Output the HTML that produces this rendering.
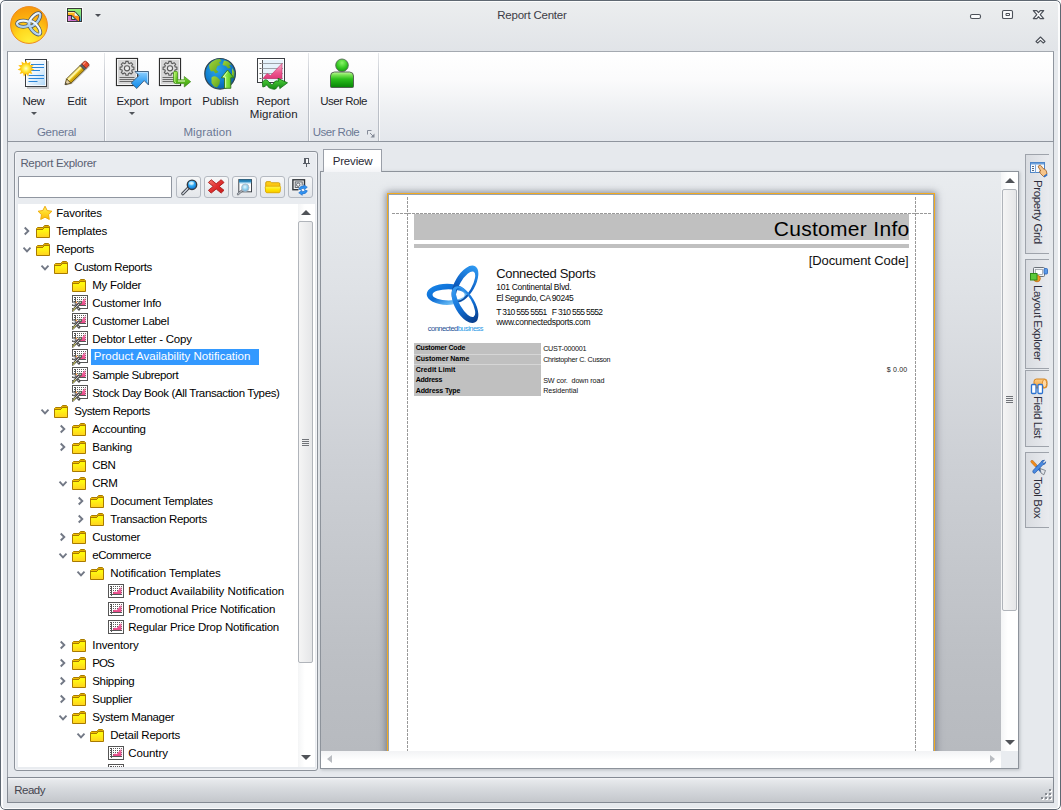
<!DOCTYPE html>
<html lang="en">
<head>
<meta charset="utf-8">
<title>Report Center</title>
<style>
*{box-sizing:border-box;margin:0;padding:0}
html,body{width:1061px;height:810px;overflow:hidden;background:#fff}
body{font-family:"Liberation Sans",sans-serif;font-size:11.5px;color:#1e1e1e;position:relative}
.abs{position:absolute}
.t{position:absolute;white-space:nowrap}
#win{position:absolute;left:0;top:0;width:1061px;height:810px;border-radius:5px;background:#e6e9ed;overflow:hidden}
#win:before{content:"";position:absolute;left:0;top:0;right:0;bottom:0;border:1px solid #5f6872;border-radius:5px;pointer-events:none;z-index:6}
#win:after{content:"";position:absolute;left:1px;top:1px;right:1px;bottom:1px;border:2px solid rgba(255,255,255,.85);border-top-width:1.500px;border-bottom-width:1.500px;border-radius:4px;pointer-events:none;z-index:5}
#titlegrad{position:absolute;left:0;top:0;width:1061px;height:51px;background:linear-gradient(#eceeef,#e1e4e8)}
#title{position:absolute;left:0;top:7px;width:1061px;text-align:center;font-size:12px;color:#3b3b3b;letter-spacing:-0.25px}
/* ribbon */
#ribbon{position:absolute;left:7px;top:51px;width:1047px;height:91px;border:1px solid #8f959e;border-top-color:#a4a9b0;background:linear-gradient(#ffffff 0%,#fbfbfc 30%,#eceef1 70%,#e4e7ec 100%)}
.gsep{position:absolute;top:1px;width:1px;height:88px;background:linear-gradient(rgba(185,190,198,.35),#c4c8cf 30%,#b4b9c1 100%)}
.gsep:after{content:"";position:absolute;left:1px;top:0;width:1px;height:88px;background:rgba(255,255,255,.75)}
.gcap{position:absolute;top:75px;height:14px;text-align:center;font-size:12px;color:#6b7894;letter-spacing:-0.2px;white-space:nowrap}
.rbtn{position:absolute;top:43px;text-align:center;font-size:12px;color:#1e1e2a;line-height:13px;white-space:nowrap;letter-spacing:-0.2px}
.dd{position:absolute;width:0;height:0;border-left:3px solid transparent;border-right:3px solid transparent;border-top:3.300px solid #50545a;margin-left:-.5px}
/* panels */
.panel{position:absolute;border:1px solid #8d939b;background:#e9ecf0;border-radius:3px;box-shadow:inset 0 0 0 1px rgba(255,255,255,.45)}
.ptitle{position:absolute;left:5px;top:4px;font-size:12px;color:#5a6072;letter-spacing:-0.3px;white-space:nowrap}
#search{position:absolute;left:3px;top:24px;width:154px;height:22px;border:1px solid #9096a0;background:#fff;border-radius:1px}
.tbtn{position:absolute;top:24px;width:25px;height:22px;border:1px solid #b4b9c1;border-radius:3px;background:linear-gradient(#f7f8f9,#e3e6ea)}
.tbtn svg{position:absolute;left:0;top:0}
#tree{position:absolute;left:3px;top:52px;width:280px;height:563px;background:#fff;overflow:hidden}
.row{position:absolute;left:0;height:18px;line-height:18px;white-space:nowrap;font-size:11.5px;color:#1c1c1c}
.row .lbl{position:absolute;top:0;height:18px;line-height:17px;white-space:nowrap}
.row svg{position:absolute;top:1px}
.sel{position:absolute;background:#3399ff;height:16px}
/* scrollbars */
.vsb{position:absolute;background:linear-gradient(90deg,#f4f5f6,#ffffff 40%,#ffffff)}
.thumb{position:absolute;border:1px solid #b0b4ba;border-radius:2px;background:linear-gradient(90deg,#f5f5f5,#e5e6e8)}
.grip{position:absolute;width:7px;height:1px;background:#707378;box-shadow:0 2px 0 #707378,0 4px 0 #707378,0 6px 0 #707378}
.arr-u{position:absolute;width:0;height:0;border-left:5px solid transparent;border-right:5px solid transparent;border-bottom:5px solid #505358}
.arr-d{position:absolute;width:0;height:0;border-left:5px solid transparent;border-right:5px solid transparent;border-top:5px solid #505358}
.arr-l{position:absolute;width:0;height:0;border-top:4.5px solid transparent;border-bottom:4.5px solid transparent;border-right:5px solid #b9bcc1}
.arr-r{position:absolute;width:0;height:0;border-top:4.5px solid transparent;border-bottom:4.5px solid transparent;border-left:5px solid #b9bcc1}
/* preview */
#tab{position:absolute;left:323px;top:149px;width:59px;height:23px;border:1px solid #9a9fa8;border-bottom:none;background:linear-gradient(#ffffff 0,#ffffff 70%,#f3f4f7 100%);z-index:2}
#pv{position:absolute;left:320px;top:171px;width:699px;height:598px;border:1px solid #8d939b;background:#e9ecf0;box-shadow:1px 1px 3px rgba(105,110,122,.38)}
#pvarea{position:absolute;left:0;top:0;width:680px;height:579px;background:linear-gradient(#e9ecef 0%,#dfe2e6 20%,#cdd0d5 50%,#bcbfc4 85%,#b7babf 100%);overflow:hidden}
#page{position:absolute;left:66px;top:21px;width:548px;height:600px;background:#fff;border:1px solid #f2aa20;box-shadow:inset 0 0 0 1px #97a3b0,0 0 7px 1px rgba(70,75,90,.6)}
.dash-v{position:absolute;width:1px;background:repeating-linear-gradient(180deg,#999 0,#999 3px,transparent 3px,transparent 4px)}
.dash-h{position:absolute;height:1px;background:repeating-linear-gradient(90deg,#999 0,#999 3px,transparent 3px,transparent 4px)}
.rp{position:absolute;white-space:nowrap;color:#111}
/* side tabs */
.stab{position:absolute;left:1025px;width:24px;border:1px solid #9ea3ab;border-right:none;background:linear-gradient(90deg,#d9dce1,#e9ebef)}
/* status */
#status{position:absolute;left:7px;top:777px;width:1047px;height:26px;border:1px solid #848a93;background:linear-gradient(#f6f7f8 0,#e7e9ec 2px,#d7dade 45%,#c4c7cc 100%)}
#status span{position:absolute;left:6px;top:5px;font-size:12px;color:#45454f;letter-spacing:-0.2px}
</style>
</head>
<body>
<div id="win">
<div id="titlegrad"></div>

<svg class="abs" style="left:7px;top:4px" width="44" height="44" viewBox="0 0 44 44">
<defs>
<radialGradient id="og" cx="50%" cy="95%" r="90%"><stop offset="0" stop-color="#ffee38"/><stop offset=".4" stop-color="#ffd81e"/><stop offset=".75" stop-color="#fcae0e"/><stop offset="1" stop-color="#f79c0a"/></radialGradient>
<linearGradient id="ol" x1="0" y1="0" x2="0" y2="1"><stop offset="0" stop-color="#f4fbff"/><stop offset="1" stop-color="#a8ceef"/></linearGradient>
</defs>
<circle cx="22" cy="21" r="18.400" fill="url(#og)" stroke="#ee8a1c" stroke-width="1"/>
<g fill="none" stroke="#34486e" stroke-width="3.700" opacity=".85">
<ellipse cx="16.300" cy="19.700" rx="6.300" ry="3.100"/>
<ellipse cx="27.550" cy="15.750" rx="8.100" ry="3.500" transform="rotate(-50.700 27.550 15.750)"/>
<ellipse cx="27.550" cy="23.850" rx="8.100" ry="3.500" transform="rotate(50.700 27.550 23.850)"/>
</g>
<g fill="none" stroke="url(#ol)" stroke-width="2.200">
<ellipse cx="16.300" cy="19.700" rx="6.300" ry="3.100"/>
<ellipse cx="27.550" cy="15.750" rx="8.100" ry="3.500" transform="rotate(-50.700 27.550 15.750)"/>
<ellipse cx="27.550" cy="23.850" rx="8.100" ry="3.500" transform="rotate(50.700 27.550 23.850)"/>
</g>
</svg>
<svg class="abs" style="left:66px;top:7px" width="17" height="16" viewBox="-1 -1 17 16">
<defs><linearGradient id="qg" x1="0" y1="0" x2="0" y2="1"><stop offset="0" stop-color="#98f274"/><stop offset=".5" stop-color="#7ee07e"/><stop offset="1" stop-color="#3a9ae8"/></linearGradient></defs>
<rect x="-.5" y="-.5" width="16" height="15" fill="none" stroke="#fff" opacity=".7"/>
<rect x=".5" y=".5" width="14" height="13" fill="url(#qg)" stroke="#383838"/>
<path d="M1 4h6.500l5 5.500V13h-2L5 7.500H1z" fill="#ff8e14"/>
<path d="M1 4h6v1.200H1z" fill="#ffe98e"/>
<path d="M1 5.200h6.500v1.500H1z" fill="#ffbe1c"/>
<path d="M1 8h3.500v3H9l2 2H1z" fill="#cc6ccc"/>
<path d="M1 8h1.500v5H1z" fill="#dc8adc"/>
<path d="M7.600 4.200v3.600h3.500z" fill="#e6fbff"/>
<path d="M5.200 8.800v2h2.200z" fill="#e6fbff"/>
<path d="M1 3.500h7l4.500 5V13" stroke="#383838" fill="none"/>
<path d="M1 7.500h4l5.500 5.500" stroke="#383838" fill="none"/>
<path d="M4.500 8v3.500H8.500" stroke="#383838" fill="none"/>
</svg>
<div class="dd" style="left:95px;top:14px;border-top-color:#4a4e55"></div>
<svg class="abs" style="left:960px;top:4px" width="90" height="46" viewBox="0 0 90 46">
<g fill="#fafbfc" stroke="#4c5159" stroke-width="1.100" stroke-linejoin="round">
<rect x="10.500" y="10.500" width="10" height="4" rx="1.600"/>
<rect x="42.500" y="6.500" width="10" height="8" rx="1.300"/>
<rect x="46" y="9.500" width="3.500" height="2" stroke-width="1"/>
<path d="M73.300 6.600h3.500l1.700 2 1.700-2h3.500l-3.500 4 3.500 4h-3.500l-1.700-2-1.700 2h-3.500l3.500-4z" stroke-width="1.200"/>
<path d="M76 37.500l4.500-4.500 4.500 4.500-1.700 1.500-2.800-2.600-2.800 2.600z"/>
</g>
</svg>
<div class="t" style="left:497.28px;top:9px;font-size:11.5px;line-height:12px;letter-spacing:-0.226px;color:#3c3c46">Report Center</div>
<div id="ribbon">
<svg class="abs" style="left:9px;top:4px" width="34" height="34" viewBox="0 0 34 34">
<defs><linearGradient id="nd" x1="0" y1="0" x2="1" y2="1"><stop offset="0" stop-color="#ffffff"/><stop offset=".5" stop-color="#eaf4fd"/><stop offset="1" stop-color="#a9d4f6"/></linearGradient>
<radialGradient id="ns" cx="50%" cy="50%" r="50%"><stop offset="0" stop-color="#fffbd0"/><stop offset=".5" stop-color="#fff04a"/><stop offset="1" stop-color="#ffc814"/></radialGradient></defs>
<rect x="10" y="5" width="22" height="28" fill="#000" opacity=".18"/>
<rect x="8.500" y="3.500" width="21" height="27" fill="url(#nd)" stroke="#3a3d42"/>
<rect x="9.500" y="4.500" width="19" height="25" fill="none" stroke="#fff" opacity=".8"/>
<g stroke="#2b86d9" stroke-width="1.1"><path d="M14 8.500h13M14 11.500h13M14 14.500h9M11.500 19.500h15.500M11.500 22.500h15.500M11.500 25.500h9"/></g>
<g transform="translate(9 12.500) scale(.92) translate(-9 -12.500)"><path d="M9 3.500l1.600 3.600 3.300-2.200-.5 3.900 4 .1-2.700 2.900 3.400 2-3.800 1.200 1.600 3.600-3.700-1.200-.8 3.900-2.400-3.100-2.400 3.100-.8-3.900-3.700 1.200 1.600-3.600L-.100 13.800l3.400-2L.600 8.900l4-.1-.5-3.900 3.300 2.200z" fill="#ffc20e"/>
<circle cx="9" cy="12.500" r="5.800" fill="url(#ns)"/></g>
</svg>
<svg class="abs" style="left:56px;top:5px" width="34" height="34" viewBox="0 0 34 34">
<defs><linearGradient id="pe" x1="0" y1="0" x2="0" y2="1"><stop offset="0" stop-color="#fff6a8"/><stop offset=".4" stop-color="#f9dc30"/><stop offset="1" stop-color="#c99a08"/></linearGradient></defs>
<g transform="translate(1 27.700) rotate(-44.500) scale(.95 1)">
<path d="M0 0L5.500 -3.200H31.500Q33.300 -3.200 33.300 0Q33.300 3.200 31.500 3.200H5.500z" fill="#000" opacity=".18" transform="translate(.2 1.300)"/>
<path d="M5.500 -3.100H25.500V3.100H5.500z" fill="url(#pe)" stroke="#5d4a12" stroke-width=".9"/>
<path d="M5.500 -1.100H25.500" stroke="#fffbd0" stroke-width="1.100" opacity=".85"/>
<path d="M5.500 1.500H25.500" stroke="#b88a06" stroke-width="1.300" opacity=".6"/>
<path d="M0 0L5.500 -3.100V3.100z" fill="#e4d2aa" stroke="#5d4a12" stroke-width=".9" stroke-linejoin="round"/>
<path d="M0 0L2.200 -1.250V1.250z" fill="#4a4a4a"/>
<rect x="25.500" y="-3.100" width="2.500" height="6.200" fill="#5c6066" stroke="#3c3f44" stroke-width=".7"/>
<path d="M28 -3.100H31.500Q33.200 -3.100 33.200 0Q33.200 3.100 31.500 3.100H28z" fill="#e5492c" stroke="#8a2a16" stroke-width=".8"/>
<path d="M28.500 -1.700H32" stroke="#ff9a80" stroke-width="1.100"/>
</g>
</svg>
<svg class="abs" style="left:107px;top:5px" width="38" height="34" viewBox="0 0 38 34">
<defs><linearGradient id="ex" x1="0" y1="0" x2="0" y2="1"><stop offset="0" stop-color="#8fd0ff"/><stop offset=".5" stop-color="#45a9f5"/><stop offset="1" stop-color="#0f8ae8"/></linearGradient></defs>
<rect x="1.500" y="1.500" width="21" height="27" fill="#d6d6d6" stroke="#2e2e2e" stroke-width="1.200"/>
<rect x="2.500" y="2.500" width="19" height="25" fill="none" stroke="#f4f4f4"/><path d="M17.22 9.91L18.91 10.18L18.91 12.42L17.22 12.69L16.67 14.01L17.68 15.40L16.10 16.98L14.71 15.97L13.39 16.52L13.12 18.21L10.88 18.21L10.61 16.52L9.29 15.97L7.90 16.98L6.32 15.40L7.33 14.01L6.78 12.69L5.09 12.42L5.09 10.18L6.78 9.91L7.33 8.59L6.32 7.20L7.90 5.62L9.29 6.63L10.61 6.08L10.88 4.39L13.12 4.39L13.39 6.08L14.71 6.63L16.10 5.62L17.68 7.20L16.67 8.59z" fill="#dcdcdc" stroke="#5a5a5a" stroke-width="1.100"/><circle cx="12" cy="11.3" r="2.600" fill="#ececec" stroke="#5a5a5a" stroke-width="1.100"/><g stroke="#6a6a6a" stroke-width="1"><path d="M4.500 20.500h15M4.500 22.500h15M4.500 24.500h15"/></g>
<path d="M20 14.500H33.500V28L29.200 23.600 21.800 31.500 16.200 26 24 18.500z" fill="url(#ex)" stroke="#3b5876" stroke-width=".9" stroke-linejoin="round"/>
<path d="M21.500 15.500H32.500V25.500" fill="none" stroke="#c8e8ff" stroke-width=".9" opacity=".8"/>
</svg>
<svg class="abs" style="left:150px;top:5px" width="40" height="34" viewBox="0 0 40 34">
<defs><linearGradient id="im" x1="0" y1="0" x2="0" y2="1"><stop offset="0" stop-color="#9be34a"/><stop offset=".55" stop-color="#5fc41e"/><stop offset="1" stop-color="#3e9a12"/></linearGradient></defs>
<rect x="1.500" y="1.500" width="21" height="27" fill="#d6d6d6" stroke="#2e2e2e" stroke-width="1.200"/>
<rect x="2.500" y="2.500" width="19" height="25" fill="none" stroke="#f4f4f4"/><path d="M17.22 9.91L18.91 10.18L18.91 12.42L17.22 12.69L16.67 14.01L17.68 15.40L16.10 16.98L14.71 15.97L13.39 16.52L13.12 18.21L10.88 18.21L10.61 16.52L9.29 15.97L7.90 16.98L6.32 15.40L7.33 14.01L6.78 12.69L5.09 12.42L5.09 10.18L6.78 9.91L7.33 8.59L6.32 7.20L7.90 5.62L9.29 6.63L10.61 6.08L10.88 4.39L13.12 4.39L13.39 6.08L14.71 6.63L16.10 5.62L17.68 7.20L16.67 8.59z" fill="#dcdcdc" stroke="#5a5a5a" stroke-width="1.100"/><circle cx="12" cy="11.3" r="2.600" fill="#ececec" stroke="#5a5a5a" stroke-width="1.100"/><g stroke="#6a6a6a" stroke-width="1"><path d="M4.500 20.500h15M4.500 22.500h15M4.500 24.500h15"/></g>
<path d="M15.500 15.500Q15.500 14.300 17 14.300H18Q19.500 14.300 19.500 15.500V22.800H26.300V19.500L32.700 24.700 26.300 30V26.600H18Q15.500 26.600 15.500 24.100z" fill="url(#im)" stroke="#3f8a1a" stroke-width=".7" stroke-linejoin="round"/>
<path d="M16.800 15.500V24.500Q16.800 25.500 18 25.500" fill="none" stroke="#d6ffa0" stroke-width="1" opacity=".8"/>
<path d="M20 24h7" stroke="#eaffd0" stroke-width="1.100" opacity=".9"/>
</svg>
<svg class="abs" style="left:195px;top:4px" width="36" height="34" viewBox="0 0 36 34">
<defs><radialGradient id="gl" cx="40%" cy="35%" r="70%"><stop offset="0" stop-color="#2ea4ea"/><stop offset=".6" stop-color="#0f7fd0"/><stop offset="1" stop-color="#0a5ea6"/></radialGradient>
<linearGradient id="pa" x1="0" y1="0" x2="1" y2="0"><stop offset="0" stop-color="#c8ff8a"/><stop offset=".5" stop-color="#7be03a"/><stop offset="1" stop-color="#3faa18"/></linearGradient>
<linearGradient id="ld" x1="0" y1="0" x2="1" y2="1"><stop offset="0" stop-color="#a4d63a"/><stop offset="1" stop-color="#5aa01e"/></linearGradient></defs>
<circle cx="17.100" cy="17.800" r="15.300" fill="url(#gl)" stroke="#2f4450" stroke-width="1.200"/>
<path d="M6 9Q9 5 13 3.500L17 3 18.500 5 16 6.500 17.500 9 14.500 10 13 13.500 15.500 16 12.500 17.500 10.500 15 8 15.500 6.500 12.500z" fill="url(#ld)"/>
<path d="M21 4.500l4 1 3.500 3-2.500.5 2 3-3 .5-2-2.500-3.500-1 1-3z" fill="url(#ld)"/>
<path d="M8.500 21.500Q11 19.500 14 21L17 24 16.500 28 14 31.500 11 30.500 8.500 27z" fill="url(#ld)"/>
<path d="M29 12l2.500 4-.5 6-2-3z" fill="url(#ld)"/>
<path d="M24.600 14L31 21.800H27.800V32.300H21.500V21.800H18.300z" fill="url(#pa)" stroke="#35761c" stroke-width=".9" stroke-linejoin="round"/>
<path d="M24.600 15.500L20.300 21H22.600V31.600" fill="none" stroke="#e6ffc4" stroke-width=".9" opacity=".9"/>
</svg>
<svg class="abs" style="left:246px;top:5px" width="36" height="34" viewBox="0 0 36 34">
<defs><linearGradient id="pk" x1="0" y1="0" x2="0" y2="1"><stop offset="0" stop-color="#f9b3cd"/><stop offset=".6" stop-color="#ec5a90"/><stop offset="1" stop-color="#e0397a"/></linearGradient>
<linearGradient id="wg" x1="0" y1="0" x2="0" y2="1"><stop offset="0" stop-color="#4fd23c"/><stop offset="1" stop-color="#168a14"/></linearGradient></defs>
<rect x="3.500" y="1.500" width="27" height="24" fill="#fdfefe" stroke="#3c3f44"/>
<rect x="8" y="3" width="21" height="21" fill="#e6f3fb"/>
<path d="M8.500 3V25" stroke="#555" stroke-width="1"/>
<g stroke="#8a8f96" stroke-width=".8"><path d="M8 6.500h21M8 11.500h21M8 16.500h21M8 21.500h21"/></g>
<g stroke="#666" stroke-width="1"><path d="M5.500 6.500h2M5.500 11.500h2M5.500 16.500h2M5.500 21.500h2"/></g>
<path d="M9 21.500L13 16.500 16.500 18.500 28 6.500V21.500z" fill="url(#pk)" stroke="#c8306a" stroke-width=".6"/>
<path d="M8.300 25.300Q11.500 20.500 14.600 24.600T19 27.300Q20.300 23.800 22.800 23.800L24.600 24.300 24 21.300 33.500 25.800 25.800 31.600 25.600 28.900Q23.700 28.300 22.500 31T14.800 30.600Q12.600 26.300 11.300 29.300L8.800 30z" fill="url(#wg)" stroke="#0f6a10" stroke-width=".8" stroke-linejoin="round"/>
</svg>
<svg class="abs" style="left:316px;top:4px" width="36" height="34" viewBox="0 0 36 34">
<defs><linearGradient id="ug" x1="0" y1="0" x2="0" y2="1"><stop offset="0" stop-color="#c4f9a4"/><stop offset=".18" stop-color="#7ee458"/><stop offset=".45" stop-color="#2cc01c"/><stop offset="1" stop-color="#078406"/></linearGradient>
<radialGradient id="uh" cx="50%" cy="30%" r="70%"><stop offset="0" stop-color="#8af468"/><stop offset=".6" stop-color="#34c822"/><stop offset="1" stop-color="#159c0e"/></radialGradient></defs>
<path d="M6.500 30.500V20Q6.500 16 10.500 16H25.500Q29.500 16 29.500 20V30.500Q29.500 31.500 28.500 31.500H7.500Q6.500 31.500 6.500 30.500z" fill="url(#ug)" stroke="#4c584c" stroke-width=".9"/>
<circle cx="18" cy="9.300" r="6.300" fill="url(#uh)" stroke="#5a6a5a" stroke-width=".9"/>
</svg>
<div class="t" style="left:14.39px;top:43px;font-size:11.5px;line-height:12px;letter-spacing:-0.275px;color:#1e1e2a">New</div>
<div class="t" style="left:59.29px;top:43px;font-size:11.5px;line-height:12px;letter-spacing:-0.135px;color:#1e1e2a">Edit</div>
<div class="t" style="left:108.39px;top:43px;font-size:11.5px;line-height:12px;letter-spacing:-0.193px;color:#1e1e2a">Export</div>
<div class="t" style="left:151.58px;top:43px;font-size:11.5px;line-height:12px;letter-spacing:-0.151px;color:#1e1e2a">Import</div>
<div class="t" style="left:194.28px;top:43px;font-size:11.5px;line-height:12px;letter-spacing:-0.204px;color:#1e1e2a">Publish</div>
<div class="t" style="left:248.58px;top:43px;font-size:11.5px;line-height:12px;letter-spacing:-0.290px;color:#1e1e2a">Report</div>
<div class="t" style="left:241.78px;top:56px;font-size:11.5px;line-height:12px;letter-spacing:0.064px;color:#1e1e2a">Migration</div>
<div class="t" style="left:312.28px;top:43px;font-size:11.5px;line-height:12px;letter-spacing:-0.506px;color:#1e1e2a">User Role</div>
<div class="dd" style="left:23px;top:60px"></div>
<div class="dd" style="left:121px;top:60px"></div>
<div class="gsep" style="left:96px"></div>
<div class="gsep" style="left:300px"></div>
<div class="gsep" style="left:370px"></div>
<div class="t" style="left:28.88px;top:74px;font-size:11.5px;line-height:12px;letter-spacing:-0.233px;color:#6b7894">General</div>
<div class="t" style="left:175.38px;top:74px;font-size:11.5px;line-height:12px;letter-spacing:0.109px;color:#6b7894">Migration</div>
<div class="t" style="left:304.78px;top:74px;font-size:11.5px;line-height:12px;letter-spacing:-0.528px;color:#6b7894">User Role</div>
<svg class="abs" style="left:359px;top:78px" width="8" height="8" viewBox="0 0 8 8"><path d="M.5 4.500V.500H4.500" fill="none" stroke="#858b98" stroke-width="1"/><path d="M7.500 3.500V7.500H3.500z" fill="#858b98"/><path d="M3 3L6 6" stroke="#858b98" stroke-width="1"/></svg>
</div>
<div class="panel" style="left:14px;top:151px;width:304px;height:620px">
<div class="t" style="left:5.39px;top:5px;font-size:11.5px;line-height:12px;letter-spacing:-0.310px;color:#5a6072">Report Explorer</div>
<svg class="abs" style="left:288px;top:6px" width="7" height="9" viewBox="0 0 7 9">
<path d="M3 1h2v4H3z" fill="#fafbfc"/><path d="M1 0h5v1H1zM1 1h2v4H1zM5 1h1v4H5zM0 5h7v1H0zM3 6h1v3H3z" fill="#595e67"/>
</svg>
<div id="search"></div>
<div class="tbtn" style="left:161px"><svg width="23" height="20" viewBox="0 0 23 20">
<defs><radialGradient id="mg" cx="45%" cy="35%" r="65%"><stop offset="0" stop-color="#b6eeff"/><stop offset=".5" stop-color="#2ba6f2"/><stop offset="1" stop-color="#0d6fd0"/></radialGradient></defs>
<path d="M5.800 16.700L11.500 10.800" stroke="#3c4047" stroke-width="3.200" stroke-linecap="round"/>
<path d="M5.800 16.700L11.500 10.800" stroke="#cdd2da" stroke-width="1.400" stroke-linecap="round"/>
<circle cx="15" cy="7.800" r="4.700" fill="url(#mg)" stroke="#343a42" stroke-width="1.400"/>
<ellipse cx="14.300" cy="6.200" rx="2.700" ry="1.600" fill="#fff" opacity=".5"/>
</svg></div>
<div class="tbtn" style="left:189px"><svg width="23" height="20" viewBox="0 0 23 20">
<defs><linearGradient id="dx" x1="0" y1="0" x2="1" y2="1"><stop offset="0" stop-color="#f47a70"/><stop offset=".5" stop-color="#e03030"/><stop offset="1" stop-color="#c41a1a"/></linearGradient></defs>
<path d="M6.200 2.700L11.200 6.800 16.200 2.700 19 5.500 14.200 9.400 19 13.300 16.200 16.100 11.200 12 6.200 16.100 3.400 13.300 8.200 9.400 3.400 5.500z" fill="url(#dx)" stroke="#a81818" stroke-width=".9" stroke-linejoin="round"/>
</svg></div>
<div class="tbtn" style="left:217px"><svg width="23" height="20" viewBox="0 0 23 20">
<defs><radialGradient id="pg" cx="45%" cy="40%" r="60%"><stop offset="0" stop-color="#e6f8ff"/><stop offset=".6" stop-color="#8fd0ee"/><stop offset="1" stop-color="#62b0dc"/></radialGradient>
<linearGradient id="pt" x1="0" y1="0" x2="0" y2="1"><stop offset="0" stop-color="#1a6e9e"/><stop offset="1" stop-color="#3a9ad0"/></linearGradient></defs>
<rect x="5.800" y="2.600" width="12.700" height="12.200" fill="#fff" stroke="#3f444b" stroke-width="1"/>
<rect x="6" y="2.400" width="12.300" height="3.300" fill="url(#pt)"/>
<rect x="6.300" y="5.700" width="11.700" height=".9" fill="#a8d8f0"/>
<path d="M5 17.200L9.500 13.200" stroke="#70757d" stroke-width="2.300" stroke-linecap="round"/>
<path d="M5 17.200L9.500 13.200" stroke="#cfd3d9" stroke-width=".9" stroke-linecap="round"/>
<circle cx="12.300" cy="10.700" r="3.700" fill="url(#pg)" stroke="#b0bcc8" stroke-width="1"/>
</svg></div>
<div class="tbtn" style="left:245px"><svg width="23" height="20" viewBox="0 0 23 20">
<defs><linearGradient id="fy" x1="0" y1="0" x2="0" y2="1"><stop offset="0" stop-color="#fff45a"/><stop offset=".5" stop-color="#ffe600"/><stop offset="1" stop-color="#f7c400"/></linearGradient>
<linearGradient id="fb" x1="0" y1="0" x2="0" y2="1"><stop offset="0" stop-color="#ffd21a"/><stop offset="1" stop-color="#f2a800"/></linearGradient></defs>
<path d="M4.700 6Q4.700 4.600 6.100 4.600H9.300L10.600 5.700H17.600Q18.900 5.700 18.900 7V14Q18.900 15.300 17.600 15.300H6Q4.700 15.300 4.700 14z" fill="url(#fb)" stroke="#c99400" stroke-width=".8"/>
<path d="M4.200 10.300Q4.100 9.300 5.300 9.300H18.500Q19.700 9.300 19.600 10.300L19.100 14.600Q19 15.800 17.700 15.800H6.100Q4.800 15.800 4.700 14.600z" fill="url(#fy)" stroke="#dba800" stroke-width=".7"/>
</svg></div>
<div class="tbtn" style="left:273px"><svg width="23" height="20" viewBox="0 0 23 20">
<rect x="3.900" y="2.800" width="11.600" height="9.900" fill="#f2f2f2" stroke="#2f3338" stroke-width="1.400"/>
<rect x="6.200" y="4.900" width="7" height="5.600" fill="#e2e5e9" stroke="#5a5e64" stroke-width=".9"/>
<circle cx="9.200" cy="7.700" r="1.700" fill="#f4f4f4" stroke="#5a5e64" stroke-width=".9"/>
<circle cx="14" cy="13" r="4.600" fill="#f6f8fa"/>
<path d="M9.600 12.200Q11 8.600 14.900 9L14.700 7.700 18.300 10.200 15.300 12.800 15.100 11.300Q12.800 11 11.900 12.900z" fill="#2f92f2" stroke="#1664c0" stroke-width=".6" stroke-linejoin="round"/>
<path d="M18.400 13.800Q17 17.400 13.100 17L13.300 18.300 9.700 15.800 12.700 13.200 12.900 14.700Q15.200 15 16.100 13.100z" fill="#2f92f2" stroke="#1664c0" stroke-width=".6" stroke-linejoin="round"/>
</svg></div>
<div id="tree">
<svg width="16" height="16" viewBox="0 0 16 16" class="abs" style="left:19px;top:1px">
<defs><linearGradient id="st0" x1="0" y1="0" x2="0" y2="1"><stop offset="0" stop-color="#fff08a"/><stop offset=".45" stop-color="#ffdc2a"/><stop offset="1" stop-color="#fbb80a"/></linearGradient></defs>
<path d="M8.00 1.20L10.17 5.51L14.94 6.24L11.52 9.64L12.29 14.41L8.00 12.20L3.71 14.41L4.48 9.64L1.06 6.24L5.83 5.51z" fill="url(#st0)" stroke="#eead0e" stroke-width="1" stroke-linejoin="round"/>
</svg><div class="t" style="left:38.28px;top:3px;font-size:11.5px;line-height:12px;letter-spacing:-0.201px;color:#000">Favorites</div>
<svg width="8" height="10" viewBox="0 0 8 10" class="abs" style="left:5px;top:22px"><path d="M1.700 1.500L5.300 5 1.700 8.500" fill="none" stroke="#727885" stroke-width="1.900"/></svg><svg width="14" height="13" viewBox="0 0 14 13" class="abs" style="left:18px;top:21px">
<defs><linearGradient id="fo1" x1="0" y1="0" x2="0" y2="1"><stop offset="0" stop-color="#ffff00"/><stop offset=".4" stop-color="#fff810"/><stop offset="1" stop-color="#ffd020"/></linearGradient></defs>
<path d="M1.500 2.500H7.500V1.500L8.500 .5H12.500L13.500 1.500V12.500H.5V3.500z" fill="url(#fo1)" stroke="#a87a00" stroke-width="1" stroke-linejoin="round"/>
<path d="M8 1h5v1H8z" fill="#e2aa00"/><path d="M1 3h6v1H1z" fill="#f4c000"/>
<path d="M8 2h5v1H8zM1 4h6v1H1zM7 3h1v1H7z" fill="#a87a00"/>
</svg><div class="t" style="left:38.28px;top:21px;font-size:11.5px;line-height:12px;letter-spacing:-0.192px;color:#000">Templates</div>
<svg width="10" height="8" viewBox="0 0 10 8" class="abs" style="left:4px;top:42px"><path d="M1.500 1.700L5 5.300 8.500 1.700" fill="none" stroke="#727885" stroke-width="1.900"/></svg><svg width="14" height="13" viewBox="0 0 14 13" class="abs" style="left:18px;top:39px">
<defs><linearGradient id="fo2" x1="0" y1="0" x2="0" y2="1"><stop offset="0" stop-color="#ffff00"/><stop offset=".4" stop-color="#fff810"/><stop offset="1" stop-color="#ffd020"/></linearGradient></defs>
<path d="M1.500 2.500H7.500V1.500L8.500 .5H12.500L13.500 1.500V12.500H.5V3.500z" fill="url(#fo2)" stroke="#a87a00" stroke-width="1" stroke-linejoin="round"/>
<path d="M8 1h5v1H8z" fill="#e2aa00"/><path d="M1 3h6v1H1z" fill="#f4c000"/>
<path d="M8 2h5v1H8zM1 4h6v1H1zM7 3h1v1H7z" fill="#a87a00"/>
</svg><div class="t" style="left:38.28px;top:39px;font-size:11.5px;line-height:12px;letter-spacing:-0.384px;color:#000">Reports</div>
<svg width="10" height="8" viewBox="0 0 10 8" class="abs" style="left:22px;top:60px"><path d="M1.500 1.700L5 5.300 8.500 1.700" fill="none" stroke="#727885" stroke-width="1.900"/></svg><svg width="14" height="13" viewBox="0 0 14 13" class="abs" style="left:36px;top:57px">
<defs><linearGradient id="fo3" x1="0" y1="0" x2="0" y2="1"><stop offset="0" stop-color="#ffff00"/><stop offset=".4" stop-color="#fff810"/><stop offset="1" stop-color="#ffd020"/></linearGradient></defs>
<path d="M1.500 2.500H7.500V1.500L8.500 .5H12.500L13.500 1.500V12.500H.5V3.500z" fill="url(#fo3)" stroke="#a87a00" stroke-width="1" stroke-linejoin="round"/>
<path d="M8 1h5v1H8z" fill="#e2aa00"/><path d="M1 3h6v1H1z" fill="#f4c000"/>
<path d="M8 2h5v1H8zM1 4h6v1H1zM7 3h1v1H7z" fill="#a87a00"/>
</svg><div class="t" style="left:56.29px;top:57px;font-size:11.5px;line-height:12px;letter-spacing:-0.393px;color:#000">Custom Reports</div>
<svg width="14" height="13" viewBox="0 0 14 13" class="abs" style="left:54px;top:75px">
<defs><linearGradient id="fo4" x1="0" y1="0" x2="0" y2="1"><stop offset="0" stop-color="#ffff00"/><stop offset=".4" stop-color="#fff810"/><stop offset="1" stop-color="#ffd020"/></linearGradient></defs>
<path d="M1.500 2.500H7.500V1.500L8.500 .5H12.500L13.500 1.500V12.500H.5V3.500z" fill="url(#fo4)" stroke="#a87a00" stroke-width="1" stroke-linejoin="round"/>
<path d="M8 1h5v1H8z" fill="#e2aa00"/><path d="M1 3h6v1H1z" fill="#f4c000"/>
<path d="M8 2h5v1H8zM1 4h6v1H1zM7 3h1v1H7z" fill="#a87a00"/>
</svg><div class="t" style="left:74.29px;top:75px;font-size:11.5px;line-height:12px;letter-spacing:-0.248px;color:#000">My Folder</div>
<svg width="16" height="17" viewBox="0 0 16 17" class="abs" style="left:54px;top:91px">
<defs><linearGradient id="rp5" x1="0" y1="0" x2="0" y2="1"><stop offset="0" stop-color="#f9a6c6"/><stop offset=".5" stop-color="#f0609a"/><stop offset="1" stop-color="#e84a88"/></linearGradient></defs>
<rect x=".5" y=".5" width="15" height="13" fill="#fff" stroke="#555"/>
<path d="M5 2h1v1h-1zM7 2h1v1h-1zM9 2h1v1h-1zM11 2h1v1h-1zM13 2h1v1h-1zM5 4h1v1h-1zM7 4h1v1h-1zM9 4h1v1h-1zM11 4h1v1h-1zM13 4h1v1h-1zM5 6h1v1h-1zM7 6h1v1h-1zM9 6h1v1h-1zM13 6h1v1h-1zM5 8h1v1h-1zM13 8h1v1h-1z" fill="#5a5a5a"/>
<path d="M5 10V8.700L7 7.500 8.600 8.300 13.400 2.400V10z" fill="url(#rp5)"/>
<path d="M3.500 2v10M2 2.500h2M2 4.500h1M2 6.500h1M2 8.500h1M2 10.500h12" fill="none" stroke="#555" stroke-width="1"/>
<path d="M0 11h8v3H0z" fill="#fff"/><path d="M0 13.500h1M7.500 13.500H8" stroke="#555"/>
<path d="M2 8.500L7 14.200" stroke="#4a4a4a" stroke-width="2.800" stroke-linecap="round"/>
<path d="M2 8.500L7 14.200" stroke="#d4d7db" stroke-width="1.100" stroke-dasharray="1 1"/>
<circle cx="2" cy="8.800" r="2" fill="#c8ccd1" stroke="#4a4a4a" stroke-width=".9"/>
<rect x="0" y="7.800" width="1.800" height="1.400" fill="#fff"/>
<path d="M.8 15.500L8.300 7.800" stroke="#4a4a4a" stroke-width="2.500" stroke-linecap="round"/>
<path d="M.8 15.500L3.800 12.400" stroke="#f6ee60" stroke-width="1.300" stroke-dasharray="1 .7"/>
<path d="M3.800 12.400L8.300 7.800" stroke="#dfe2e6" stroke-width="1" />
<rect x="7" y="6.300" width="2.500" height="2.200" fill="#b8c2b0" stroke="#4a5a4a" stroke-width=".8"/>
<rect x="3.800" y="6.600" width="1.300" height="1.300" fill="#f08a20" transform="rotate(45 4.400 7.200)"/>
</svg><div class="t" style="left:74.29px;top:93px;font-size:11.5px;line-height:12px;letter-spacing:-0.250px;color:#000">Customer Info</div>
<svg width="16" height="17" viewBox="0 0 16 17" class="abs" style="left:54px;top:109px">
<defs><linearGradient id="rp6" x1="0" y1="0" x2="0" y2="1"><stop offset="0" stop-color="#f9a6c6"/><stop offset=".5" stop-color="#f0609a"/><stop offset="1" stop-color="#e84a88"/></linearGradient></defs>
<rect x=".5" y=".5" width="15" height="13" fill="#fff" stroke="#555"/>
<path d="M5 2h1v1h-1zM7 2h1v1h-1zM9 2h1v1h-1zM11 2h1v1h-1zM13 2h1v1h-1zM5 4h1v1h-1zM7 4h1v1h-1zM9 4h1v1h-1zM11 4h1v1h-1zM13 4h1v1h-1zM5 6h1v1h-1zM7 6h1v1h-1zM9 6h1v1h-1zM13 6h1v1h-1zM5 8h1v1h-1zM13 8h1v1h-1z" fill="#5a5a5a"/>
<path d="M5 10V8.700L7 7.500 8.600 8.300 13.400 2.400V10z" fill="url(#rp6)"/>
<path d="M3.500 2v10M2 2.500h2M2 4.500h1M2 6.500h1M2 8.500h1M2 10.500h12" fill="none" stroke="#555" stroke-width="1"/>
<path d="M0 11h8v3H0z" fill="#fff"/><path d="M0 13.500h1M7.500 13.500H8" stroke="#555"/>
<path d="M2 8.500L7 14.200" stroke="#4a4a4a" stroke-width="2.800" stroke-linecap="round"/>
<path d="M2 8.500L7 14.200" stroke="#d4d7db" stroke-width="1.100" stroke-dasharray="1 1"/>
<circle cx="2" cy="8.800" r="2" fill="#c8ccd1" stroke="#4a4a4a" stroke-width=".9"/>
<rect x="0" y="7.800" width="1.800" height="1.400" fill="#fff"/>
<path d="M.8 15.500L8.300 7.800" stroke="#4a4a4a" stroke-width="2.500" stroke-linecap="round"/>
<path d="M.8 15.500L3.800 12.400" stroke="#f6ee60" stroke-width="1.300" stroke-dasharray="1 .7"/>
<path d="M3.800 12.400L8.300 7.800" stroke="#dfe2e6" stroke-width="1" />
<rect x="7" y="6.300" width="2.500" height="2.200" fill="#b8c2b0" stroke="#4a5a4a" stroke-width=".8"/>
<rect x="3.800" y="6.600" width="1.300" height="1.300" fill="#f08a20" transform="rotate(45 4.400 7.200)"/>
</svg><div class="t" style="left:74.29px;top:111px;font-size:11.5px;line-height:12px;letter-spacing:-0.328px;color:#000">Customer Label</div>
<svg width="16" height="17" viewBox="0 0 16 17" class="abs" style="left:54px;top:127px">
<defs><linearGradient id="rp7" x1="0" y1="0" x2="0" y2="1"><stop offset="0" stop-color="#f9a6c6"/><stop offset=".5" stop-color="#f0609a"/><stop offset="1" stop-color="#e84a88"/></linearGradient></defs>
<rect x=".5" y=".5" width="15" height="13" fill="#fff" stroke="#555"/>
<path d="M5 2h1v1h-1zM7 2h1v1h-1zM9 2h1v1h-1zM11 2h1v1h-1zM13 2h1v1h-1zM5 4h1v1h-1zM7 4h1v1h-1zM9 4h1v1h-1zM11 4h1v1h-1zM13 4h1v1h-1zM5 6h1v1h-1zM7 6h1v1h-1zM9 6h1v1h-1zM13 6h1v1h-1zM5 8h1v1h-1zM13 8h1v1h-1z" fill="#5a5a5a"/>
<path d="M5 10V8.700L7 7.500 8.600 8.300 13.400 2.400V10z" fill="url(#rp7)"/>
<path d="M3.500 2v10M2 2.500h2M2 4.500h1M2 6.500h1M2 8.500h1M2 10.500h12" fill="none" stroke="#555" stroke-width="1"/>
<path d="M0 11h8v3H0z" fill="#fff"/><path d="M0 13.500h1M7.500 13.500H8" stroke="#555"/>
<path d="M2 8.500L7 14.200" stroke="#4a4a4a" stroke-width="2.800" stroke-linecap="round"/>
<path d="M2 8.500L7 14.200" stroke="#d4d7db" stroke-width="1.100" stroke-dasharray="1 1"/>
<circle cx="2" cy="8.800" r="2" fill="#c8ccd1" stroke="#4a4a4a" stroke-width=".9"/>
<rect x="0" y="7.800" width="1.800" height="1.400" fill="#fff"/>
<path d="M.8 15.500L8.300 7.800" stroke="#4a4a4a" stroke-width="2.500" stroke-linecap="round"/>
<path d="M.8 15.500L3.800 12.400" stroke="#f6ee60" stroke-width="1.300" stroke-dasharray="1 .7"/>
<path d="M3.800 12.400L8.300 7.800" stroke="#dfe2e6" stroke-width="1" />
<rect x="7" y="6.300" width="2.500" height="2.200" fill="#b8c2b0" stroke="#4a5a4a" stroke-width=".8"/>
<rect x="3.800" y="6.600" width="1.300" height="1.300" fill="#f08a20" transform="rotate(45 4.400 7.200)"/>
</svg><div class="t" style="left:74.29px;top:129px;font-size:11.5px;line-height:12px;letter-spacing:-0.240px;color:#000">Debtor Letter - Copy</div>
<svg width="16" height="17" viewBox="0 0 16 17" class="abs" style="left:54px;top:145px">
<defs><linearGradient id="rp8" x1="0" y1="0" x2="0" y2="1"><stop offset="0" stop-color="#f9a6c6"/><stop offset=".5" stop-color="#f0609a"/><stop offset="1" stop-color="#e84a88"/></linearGradient></defs>
<rect x=".5" y=".5" width="15" height="13" fill="#fff" stroke="#555"/>
<path d="M5 2h1v1h-1zM7 2h1v1h-1zM9 2h1v1h-1zM11 2h1v1h-1zM13 2h1v1h-1zM5 4h1v1h-1zM7 4h1v1h-1zM9 4h1v1h-1zM11 4h1v1h-1zM13 4h1v1h-1zM5 6h1v1h-1zM7 6h1v1h-1zM9 6h1v1h-1zM13 6h1v1h-1zM5 8h1v1h-1zM13 8h1v1h-1z" fill="#5a5a5a"/>
<path d="M5 10V8.700L7 7.500 8.600 8.300 13.400 2.400V10z" fill="url(#rp8)"/>
<path d="M3.500 2v10M2 2.500h2M2 4.500h1M2 6.500h1M2 8.500h1M2 10.500h12" fill="none" stroke="#555" stroke-width="1"/>
<path d="M0 11h8v3H0z" fill="#fff"/><path d="M0 13.500h1M7.500 13.500H8" stroke="#555"/>
<path d="M2 8.500L7 14.200" stroke="#4a4a4a" stroke-width="2.800" stroke-linecap="round"/>
<path d="M2 8.500L7 14.200" stroke="#d4d7db" stroke-width="1.100" stroke-dasharray="1 1"/>
<circle cx="2" cy="8.800" r="2" fill="#c8ccd1" stroke="#4a4a4a" stroke-width=".9"/>
<rect x="0" y="7.800" width="1.800" height="1.400" fill="#fff"/>
<path d="M.8 15.500L8.300 7.800" stroke="#4a4a4a" stroke-width="2.500" stroke-linecap="round"/>
<path d="M.8 15.500L3.800 12.400" stroke="#f6ee60" stroke-width="1.300" stroke-dasharray="1 .7"/>
<path d="M3.800 12.400L8.300 7.800" stroke="#dfe2e6" stroke-width="1" />
<rect x="7" y="6.300" width="2.500" height="2.200" fill="#b8c2b0" stroke="#4a5a4a" stroke-width=".8"/>
<rect x="3.800" y="6.600" width="1.300" height="1.300" fill="#f08a20" transform="rotate(45 4.400 7.200)"/>
</svg><div class="sel" style="left:73px;top:145px;width:168px"></div><div class="t" style="left:75.79px;top:146px;font-size:11.5px;line-height:12px;letter-spacing:0.006px;color:#fff">Product Availability Notification</div>
<svg width="16" height="17" viewBox="0 0 16 17" class="abs" style="left:54px;top:163px">
<defs><linearGradient id="rp9" x1="0" y1="0" x2="0" y2="1"><stop offset="0" stop-color="#f9a6c6"/><stop offset=".5" stop-color="#f0609a"/><stop offset="1" stop-color="#e84a88"/></linearGradient></defs>
<rect x=".5" y=".5" width="15" height="13" fill="#fff" stroke="#555"/>
<path d="M5 2h1v1h-1zM7 2h1v1h-1zM9 2h1v1h-1zM11 2h1v1h-1zM13 2h1v1h-1zM5 4h1v1h-1zM7 4h1v1h-1zM9 4h1v1h-1zM11 4h1v1h-1zM13 4h1v1h-1zM5 6h1v1h-1zM7 6h1v1h-1zM9 6h1v1h-1zM13 6h1v1h-1zM5 8h1v1h-1zM13 8h1v1h-1z" fill="#5a5a5a"/>
<path d="M5 10V8.700L7 7.500 8.600 8.300 13.400 2.400V10z" fill="url(#rp9)"/>
<path d="M3.500 2v10M2 2.500h2M2 4.500h1M2 6.500h1M2 8.500h1M2 10.500h12" fill="none" stroke="#555" stroke-width="1"/>
<path d="M0 11h8v3H0z" fill="#fff"/><path d="M0 13.500h1M7.500 13.500H8" stroke="#555"/>
<path d="M2 8.500L7 14.200" stroke="#4a4a4a" stroke-width="2.800" stroke-linecap="round"/>
<path d="M2 8.500L7 14.200" stroke="#d4d7db" stroke-width="1.100" stroke-dasharray="1 1"/>
<circle cx="2" cy="8.800" r="2" fill="#c8ccd1" stroke="#4a4a4a" stroke-width=".9"/>
<rect x="0" y="7.800" width="1.800" height="1.400" fill="#fff"/>
<path d="M.8 15.500L8.300 7.800" stroke="#4a4a4a" stroke-width="2.500" stroke-linecap="round"/>
<path d="M.8 15.500L3.800 12.400" stroke="#f6ee60" stroke-width="1.300" stroke-dasharray="1 .7"/>
<path d="M3.800 12.400L8.300 7.800" stroke="#dfe2e6" stroke-width="1" />
<rect x="7" y="6.300" width="2.500" height="2.200" fill="#b8c2b0" stroke="#4a5a4a" stroke-width=".8"/>
<rect x="3.800" y="6.600" width="1.300" height="1.300" fill="#f08a20" transform="rotate(45 4.400 7.200)"/>
</svg><div class="t" style="left:74.29px;top:165px;font-size:11.5px;line-height:12px;letter-spacing:-0.426px;color:#000">Sample Subreport</div>
<svg width="16" height="17" viewBox="0 0 16 17" class="abs" style="left:54px;top:181px">
<defs><linearGradient id="rp10" x1="0" y1="0" x2="0" y2="1"><stop offset="0" stop-color="#f9a6c6"/><stop offset=".5" stop-color="#f0609a"/><stop offset="1" stop-color="#e84a88"/></linearGradient></defs>
<rect x=".5" y=".5" width="15" height="13" fill="#fff" stroke="#555"/>
<path d="M5 2h1v1h-1zM7 2h1v1h-1zM9 2h1v1h-1zM11 2h1v1h-1zM13 2h1v1h-1zM5 4h1v1h-1zM7 4h1v1h-1zM9 4h1v1h-1zM11 4h1v1h-1zM13 4h1v1h-1zM5 6h1v1h-1zM7 6h1v1h-1zM9 6h1v1h-1zM13 6h1v1h-1zM5 8h1v1h-1zM13 8h1v1h-1z" fill="#5a5a5a"/>
<path d="M5 10V8.700L7 7.500 8.600 8.300 13.400 2.400V10z" fill="url(#rp10)"/>
<path d="M3.500 2v10M2 2.500h2M2 4.500h1M2 6.500h1M2 8.500h1M2 10.500h12" fill="none" stroke="#555" stroke-width="1"/>
<path d="M0 11h8v3H0z" fill="#fff"/><path d="M0 13.500h1M7.500 13.500H8" stroke="#555"/>
<path d="M2 8.500L7 14.200" stroke="#4a4a4a" stroke-width="2.800" stroke-linecap="round"/>
<path d="M2 8.500L7 14.200" stroke="#d4d7db" stroke-width="1.100" stroke-dasharray="1 1"/>
<circle cx="2" cy="8.800" r="2" fill="#c8ccd1" stroke="#4a4a4a" stroke-width=".9"/>
<rect x="0" y="7.800" width="1.800" height="1.400" fill="#fff"/>
<path d="M.8 15.500L8.300 7.800" stroke="#4a4a4a" stroke-width="2.500" stroke-linecap="round"/>
<path d="M.8 15.500L3.800 12.400" stroke="#f6ee60" stroke-width="1.300" stroke-dasharray="1 .7"/>
<path d="M3.800 12.400L8.300 7.800" stroke="#dfe2e6" stroke-width="1" />
<rect x="7" y="6.300" width="2.500" height="2.200" fill="#b8c2b0" stroke="#4a5a4a" stroke-width=".8"/>
<rect x="3.800" y="6.600" width="1.300" height="1.300" fill="#f08a20" transform="rotate(45 4.400 7.200)"/>
</svg><div class="t" style="left:74.29px;top:183px;font-size:11.5px;line-height:12px;letter-spacing:-0.384px;color:#000">Stock Day Book (All Transaction Types)</div>
<svg width="10" height="8" viewBox="0 0 10 8" class="abs" style="left:22px;top:204px"><path d="M1.500 1.700L5 5.300 8.500 1.700" fill="none" stroke="#727885" stroke-width="1.900"/></svg><svg width="14" height="13" viewBox="0 0 14 13" class="abs" style="left:36px;top:201px">
<defs><linearGradient id="fo11" x1="0" y1="0" x2="0" y2="1"><stop offset="0" stop-color="#ffff00"/><stop offset=".4" stop-color="#fff810"/><stop offset="1" stop-color="#ffd020"/></linearGradient></defs>
<path d="M1.500 2.500H7.500V1.500L8.500 .5H12.500L13.500 1.500V12.500H.5V3.500z" fill="url(#fo11)" stroke="#a87a00" stroke-width="1" stroke-linejoin="round"/>
<path d="M8 1h5v1H8z" fill="#e2aa00"/><path d="M1 3h6v1H1z" fill="#f4c000"/>
<path d="M8 2h5v1H8zM1 4h6v1H1zM7 3h1v1H7z" fill="#a87a00"/>
</svg><div class="t" style="left:56.29px;top:201px;font-size:11.5px;line-height:12px;letter-spacing:-0.444px;color:#000">System Reports</div>
<svg width="8" height="10" viewBox="0 0 8 10" class="abs" style="left:41px;top:220px"><path d="M1.700 1.500L5.300 5 1.700 8.500" fill="none" stroke="#727885" stroke-width="1.900"/></svg><svg width="14" height="13" viewBox="0 0 14 13" class="abs" style="left:54px;top:219px">
<defs><linearGradient id="fo12" x1="0" y1="0" x2="0" y2="1"><stop offset="0" stop-color="#ffff00"/><stop offset=".4" stop-color="#fff810"/><stop offset="1" stop-color="#ffd020"/></linearGradient></defs>
<path d="M1.500 2.500H7.500V1.500L8.500 .5H12.500L13.500 1.500V12.500H.5V3.500z" fill="url(#fo12)" stroke="#a87a00" stroke-width="1" stroke-linejoin="round"/>
<path d="M8 1h5v1H8z" fill="#e2aa00"/><path d="M1 3h6v1H1z" fill="#f4c000"/>
<path d="M8 2h5v1H8zM1 4h6v1H1zM7 3h1v1H7z" fill="#a87a00"/>
</svg><div class="t" style="left:74.29px;top:219px;font-size:11.5px;line-height:12px;letter-spacing:-0.352px;color:#000">Accounting</div>
<svg width="8" height="10" viewBox="0 0 8 10" class="abs" style="left:41px;top:238px"><path d="M1.700 1.500L5.300 5 1.700 8.500" fill="none" stroke="#727885" stroke-width="1.900"/></svg><svg width="14" height="13" viewBox="0 0 14 13" class="abs" style="left:54px;top:237px">
<defs><linearGradient id="fo13" x1="0" y1="0" x2="0" y2="1"><stop offset="0" stop-color="#ffff00"/><stop offset=".4" stop-color="#fff810"/><stop offset="1" stop-color="#ffd020"/></linearGradient></defs>
<path d="M1.500 2.500H7.500V1.500L8.500 .5H12.500L13.500 1.500V12.500H.5V3.500z" fill="url(#fo13)" stroke="#a87a00" stroke-width="1" stroke-linejoin="round"/>
<path d="M8 1h5v1H8z" fill="#e2aa00"/><path d="M1 3h6v1H1z" fill="#f4c000"/>
<path d="M8 2h5v1H8zM1 4h6v1H1zM7 3h1v1H7z" fill="#a87a00"/>
</svg><div class="t" style="left:74.29px;top:237px;font-size:11.5px;line-height:12px;letter-spacing:-0.282px;color:#000">Banking</div>
<svg width="14" height="13" viewBox="0 0 14 13" class="abs" style="left:54px;top:255px">
<defs><linearGradient id="fo14" x1="0" y1="0" x2="0" y2="1"><stop offset="0" stop-color="#ffff00"/><stop offset=".4" stop-color="#fff810"/><stop offset="1" stop-color="#ffd020"/></linearGradient></defs>
<path d="M1.500 2.500H7.500V1.500L8.500 .5H12.500L13.500 1.500V12.500H.5V3.500z" fill="url(#fo14)" stroke="#a87a00" stroke-width="1" stroke-linejoin="round"/>
<path d="M8 1h5v1H8z" fill="#e2aa00"/><path d="M1 3h6v1H1z" fill="#f4c000"/>
<path d="M8 2h5v1H8zM1 4h6v1H1zM7 3h1v1H7z" fill="#a87a00"/>
</svg><div class="t" style="left:74.29px;top:255px;font-size:11.5px;line-height:12px;letter-spacing:-0.430px;color:#000">CBN</div>
<svg width="10" height="8" viewBox="0 0 10 8" class="abs" style="left:40px;top:276px"><path d="M1.500 1.700L5 5.300 8.500 1.700" fill="none" stroke="#727885" stroke-width="1.900"/></svg><svg width="14" height="13" viewBox="0 0 14 13" class="abs" style="left:54px;top:273px">
<defs><linearGradient id="fo15" x1="0" y1="0" x2="0" y2="1"><stop offset="0" stop-color="#ffff00"/><stop offset=".4" stop-color="#fff810"/><stop offset="1" stop-color="#ffd020"/></linearGradient></defs>
<path d="M1.500 2.500H7.500V1.500L8.500 .5H12.500L13.500 1.500V12.500H.5V3.500z" fill="url(#fo15)" stroke="#a87a00" stroke-width="1" stroke-linejoin="round"/>
<path d="M8 1h5v1H8z" fill="#e2aa00"/><path d="M1 3h6v1H1z" fill="#f4c000"/>
<path d="M8 2h5v1H8zM1 4h6v1H1zM7 3h1v1H7z" fill="#a87a00"/>
</svg><div class="t" style="left:74.29px;top:273px;font-size:11.5px;line-height:12px;letter-spacing:-0.371px;color:#000">CRM</div>
<svg width="8" height="10" viewBox="0 0 8 10" class="abs" style="left:59px;top:292px"><path d="M1.700 1.500L5.300 5 1.700 8.500" fill="none" stroke="#727885" stroke-width="1.900"/></svg><svg width="14" height="13" viewBox="0 0 14 13" class="abs" style="left:72px;top:291px">
<defs><linearGradient id="fo16" x1="0" y1="0" x2="0" y2="1"><stop offset="0" stop-color="#ffff00"/><stop offset=".4" stop-color="#fff810"/><stop offset="1" stop-color="#ffd020"/></linearGradient></defs>
<path d="M1.500 2.500H7.500V1.500L8.500 .5H12.500L13.500 1.500V12.500H.5V3.500z" fill="url(#fo16)" stroke="#a87a00" stroke-width="1" stroke-linejoin="round"/>
<path d="M8 1h5v1H8z" fill="#e2aa00"/><path d="M1 3h6v1H1z" fill="#f4c000"/>
<path d="M8 2h5v1H8zM1 4h6v1H1zM7 3h1v1H7z" fill="#a87a00"/>
</svg><div class="t" style="left:92.29px;top:291px;font-size:11.5px;line-height:12px;letter-spacing:-0.296px;color:#000">Document Templates</div>
<svg width="8" height="10" viewBox="0 0 8 10" class="abs" style="left:59px;top:310px"><path d="M1.700 1.500L5.300 5 1.700 8.500" fill="none" stroke="#727885" stroke-width="1.900"/></svg><svg width="14" height="13" viewBox="0 0 14 13" class="abs" style="left:72px;top:309px">
<defs><linearGradient id="fo17" x1="0" y1="0" x2="0" y2="1"><stop offset="0" stop-color="#ffff00"/><stop offset=".4" stop-color="#fff810"/><stop offset="1" stop-color="#ffd020"/></linearGradient></defs>
<path d="M1.500 2.500H7.500V1.500L8.500 .5H12.500L13.500 1.500V12.500H.5V3.500z" fill="url(#fo17)" stroke="#a87a00" stroke-width="1" stroke-linejoin="round"/>
<path d="M8 1h5v1H8z" fill="#e2aa00"/><path d="M1 3h6v1H1z" fill="#f4c000"/>
<path d="M8 2h5v1H8zM1 4h6v1H1zM7 3h1v1H7z" fill="#a87a00"/>
</svg><div class="t" style="left:92.29px;top:309px;font-size:11.5px;line-height:12px;letter-spacing:-0.344px;color:#000">Transaction Reports</div>
<svg width="8" height="10" viewBox="0 0 8 10" class="abs" style="left:41px;top:328px"><path d="M1.700 1.500L5.300 5 1.700 8.500" fill="none" stroke="#727885" stroke-width="1.900"/></svg><svg width="14" height="13" viewBox="0 0 14 13" class="abs" style="left:54px;top:327px">
<defs><linearGradient id="fo18" x1="0" y1="0" x2="0" y2="1"><stop offset="0" stop-color="#ffff00"/><stop offset=".4" stop-color="#fff810"/><stop offset="1" stop-color="#ffd020"/></linearGradient></defs>
<path d="M1.500 2.500H7.500V1.500L8.500 .5H12.500L13.500 1.500V12.500H.5V3.500z" fill="url(#fo18)" stroke="#a87a00" stroke-width="1" stroke-linejoin="round"/>
<path d="M8 1h5v1H8z" fill="#e2aa00"/><path d="M1 3h6v1H1z" fill="#f4c000"/>
<path d="M8 2h5v1H8zM1 4h6v1H1zM7 3h1v1H7z" fill="#a87a00"/>
</svg><div class="t" style="left:74.29px;top:327px;font-size:11.5px;line-height:12px;letter-spacing:-0.246px;color:#000">Customer</div>
<svg width="10" height="8" viewBox="0 0 10 8" class="abs" style="left:40px;top:348px"><path d="M1.500 1.700L5 5.300 8.500 1.700" fill="none" stroke="#727885" stroke-width="1.900"/></svg><svg width="14" height="13" viewBox="0 0 14 13" class="abs" style="left:54px;top:345px">
<defs><linearGradient id="fo19" x1="0" y1="0" x2="0" y2="1"><stop offset="0" stop-color="#ffff00"/><stop offset=".4" stop-color="#fff810"/><stop offset="1" stop-color="#ffd020"/></linearGradient></defs>
<path d="M1.500 2.500H7.500V1.500L8.500 .5H12.500L13.500 1.500V12.500H.5V3.500z" fill="url(#fo19)" stroke="#a87a00" stroke-width="1" stroke-linejoin="round"/>
<path d="M8 1h5v1H8z" fill="#e2aa00"/><path d="M1 3h6v1H1z" fill="#f4c000"/>
<path d="M8 2h5v1H8zM1 4h6v1H1zM7 3h1v1H7z" fill="#a87a00"/>
</svg><div class="t" style="left:74.29px;top:345px;font-size:11.5px;line-height:12px;letter-spacing:-0.450px;color:#000">eCommerce</div>
<svg width="10" height="8" viewBox="0 0 10 8" class="abs" style="left:58px;top:366px"><path d="M1.500 1.700L5 5.300 8.500 1.700" fill="none" stroke="#727885" stroke-width="1.900"/></svg><svg width="14" height="13" viewBox="0 0 14 13" class="abs" style="left:72px;top:363px">
<defs><linearGradient id="fo20" x1="0" y1="0" x2="0" y2="1"><stop offset="0" stop-color="#ffff00"/><stop offset=".4" stop-color="#fff810"/><stop offset="1" stop-color="#ffd020"/></linearGradient></defs>
<path d="M1.500 2.500H7.500V1.500L8.500 .5H12.500L13.500 1.500V12.500H.5V3.500z" fill="url(#fo20)" stroke="#a87a00" stroke-width="1" stroke-linejoin="round"/>
<path d="M8 1h5v1H8z" fill="#e2aa00"/><path d="M1 3h6v1H1z" fill="#f4c000"/>
<path d="M8 2h5v1H8zM1 4h6v1H1zM7 3h1v1H7z" fill="#a87a00"/>
</svg><div class="t" style="left:92.29px;top:363px;font-size:11.5px;line-height:12px;letter-spacing:-0.087px;color:#000">Notification Templates</div>
<svg width="16" height="14" viewBox="0 0 16 14" class="abs" style="left:90px;top:380px">
<defs><linearGradient id="rp21" x1="0" y1="0" x2="0" y2="1"><stop offset="0" stop-color="#f9a6c6"/><stop offset=".5" stop-color="#f0609a"/><stop offset="1" stop-color="#e84a88"/></linearGradient></defs>
<rect x=".5" y=".5" width="15" height="13" fill="#fff" stroke="#555"/>
<path d="M5 2h1v1h-1zM7 2h1v1h-1zM9 2h1v1h-1zM11 2h1v1h-1zM13 2h1v1h-1zM5 4h1v1h-1zM7 4h1v1h-1zM9 4h1v1h-1zM11 4h1v1h-1zM13 4h1v1h-1zM5 6h1v1h-1zM7 6h1v1h-1zM9 6h1v1h-1zM13 6h1v1h-1zM5 8h1v1h-1zM13 8h1v1h-1z" fill="#5a5a5a"/>
<path d="M5 10V8.700L7 7.500 8.600 8.300 13.400 2.400V10z" fill="url(#rp21)"/>
<path d="M3.500 2v10M2 2.500h2M2 4.500h1M2 6.500h1M2 8.500h1M2 10.500h12" fill="none" stroke="#555" stroke-width="1"/>
</svg><div class="t" style="left:110.28px;top:381px;font-size:11.5px;line-height:12px;letter-spacing:-0.013px;color:#000">Product Availability Notification</div>
<svg width="16" height="14" viewBox="0 0 16 14" class="abs" style="left:90px;top:398px">
<defs><linearGradient id="rp22" x1="0" y1="0" x2="0" y2="1"><stop offset="0" stop-color="#f9a6c6"/><stop offset=".5" stop-color="#f0609a"/><stop offset="1" stop-color="#e84a88"/></linearGradient></defs>
<rect x=".5" y=".5" width="15" height="13" fill="#fff" stroke="#555"/>
<path d="M5 2h1v1h-1zM7 2h1v1h-1zM9 2h1v1h-1zM11 2h1v1h-1zM13 2h1v1h-1zM5 4h1v1h-1zM7 4h1v1h-1zM9 4h1v1h-1zM11 4h1v1h-1zM13 4h1v1h-1zM5 6h1v1h-1zM7 6h1v1h-1zM9 6h1v1h-1zM13 6h1v1h-1zM5 8h1v1h-1zM13 8h1v1h-1z" fill="#5a5a5a"/>
<path d="M5 10V8.700L7 7.500 8.600 8.300 13.400 2.400V10z" fill="url(#rp22)"/>
<path d="M3.500 2v10M2 2.500h2M2 4.500h1M2 6.500h1M2 8.500h1M2 10.500h12" fill="none" stroke="#555" stroke-width="1"/>
</svg><div class="t" style="left:110.28px;top:399px;font-size:11.5px;line-height:12px;letter-spacing:-0.128px;color:#000">Promotional Price Notification</div>
<svg width="16" height="14" viewBox="0 0 16 14" class="abs" style="left:90px;top:416px">
<defs><linearGradient id="rp23" x1="0" y1="0" x2="0" y2="1"><stop offset="0" stop-color="#f9a6c6"/><stop offset=".5" stop-color="#f0609a"/><stop offset="1" stop-color="#e84a88"/></linearGradient></defs>
<rect x=".5" y=".5" width="15" height="13" fill="#fff" stroke="#555"/>
<path d="M5 2h1v1h-1zM7 2h1v1h-1zM9 2h1v1h-1zM11 2h1v1h-1zM13 2h1v1h-1zM5 4h1v1h-1zM7 4h1v1h-1zM9 4h1v1h-1zM11 4h1v1h-1zM13 4h1v1h-1zM5 6h1v1h-1zM7 6h1v1h-1zM9 6h1v1h-1zM13 6h1v1h-1zM5 8h1v1h-1zM13 8h1v1h-1z" fill="#5a5a5a"/>
<path d="M5 10V8.700L7 7.500 8.600 8.300 13.400 2.400V10z" fill="url(#rp23)"/>
<path d="M3.500 2v10M2 2.500h2M2 4.500h1M2 6.500h1M2 8.500h1M2 10.500h12" fill="none" stroke="#555" stroke-width="1"/>
</svg><div class="t" style="left:110.28px;top:417px;font-size:11.5px;line-height:12px;letter-spacing:-0.229px;color:#000">Regular Price Drop Notification</div>
<svg width="8" height="10" viewBox="0 0 8 10" class="abs" style="left:41px;top:436px"><path d="M1.700 1.500L5.300 5 1.700 8.500" fill="none" stroke="#727885" stroke-width="1.900"/></svg><svg width="14" height="13" viewBox="0 0 14 13" class="abs" style="left:54px;top:435px">
<defs><linearGradient id="fo24" x1="0" y1="0" x2="0" y2="1"><stop offset="0" stop-color="#ffff00"/><stop offset=".4" stop-color="#fff810"/><stop offset="1" stop-color="#ffd020"/></linearGradient></defs>
<path d="M1.500 2.500H7.500V1.500L8.500 .5H12.500L13.500 1.500V12.500H.5V3.500z" fill="url(#fo24)" stroke="#a87a00" stroke-width="1" stroke-linejoin="round"/>
<path d="M8 1h5v1H8z" fill="#e2aa00"/><path d="M1 3h6v1H1z" fill="#f4c000"/>
<path d="M8 2h5v1H8zM1 4h6v1H1zM7 3h1v1H7z" fill="#a87a00"/>
</svg><div class="t" style="left:74.29px;top:435px;font-size:11.5px;line-height:12px;letter-spacing:-0.091px;color:#000">Inventory</div>
<svg width="8" height="10" viewBox="0 0 8 10" class="abs" style="left:41px;top:454px"><path d="M1.700 1.500L5.300 5 1.700 8.500" fill="none" stroke="#727885" stroke-width="1.900"/></svg><svg width="14" height="13" viewBox="0 0 14 13" class="abs" style="left:54px;top:453px">
<defs><linearGradient id="fo25" x1="0" y1="0" x2="0" y2="1"><stop offset="0" stop-color="#ffff00"/><stop offset=".4" stop-color="#fff810"/><stop offset="1" stop-color="#ffd020"/></linearGradient></defs>
<path d="M1.500 2.500H7.500V1.500L8.500 .5H12.500L13.500 1.500V12.500H.5V3.500z" fill="url(#fo25)" stroke="#a87a00" stroke-width="1" stroke-linejoin="round"/>
<path d="M8 1h5v1H8z" fill="#e2aa00"/><path d="M1 3h6v1H1z" fill="#f4c000"/>
<path d="M8 2h5v1H8zM1 4h6v1H1zM7 3h1v1H7z" fill="#a87a00"/>
</svg><div class="t" style="left:74.29px;top:453px;font-size:11.5px;line-height:12px;letter-spacing:-0.902px;color:#000">POS</div>
<svg width="8" height="10" viewBox="0 0 8 10" class="abs" style="left:41px;top:472px"><path d="M1.700 1.500L5.300 5 1.700 8.500" fill="none" stroke="#727885" stroke-width="1.900"/></svg><svg width="14" height="13" viewBox="0 0 14 13" class="abs" style="left:54px;top:471px">
<defs><linearGradient id="fo26" x1="0" y1="0" x2="0" y2="1"><stop offset="0" stop-color="#ffff00"/><stop offset=".4" stop-color="#fff810"/><stop offset="1" stop-color="#ffd020"/></linearGradient></defs>
<path d="M1.500 2.500H7.500V1.500L8.500 .5H12.500L13.500 1.500V12.500H.5V3.500z" fill="url(#fo26)" stroke="#a87a00" stroke-width="1" stroke-linejoin="round"/>
<path d="M8 1h5v1H8z" fill="#e2aa00"/><path d="M1 3h6v1H1z" fill="#f4c000"/>
<path d="M8 2h5v1H8zM1 4h6v1H1zM7 3h1v1H7z" fill="#a87a00"/>
</svg><div class="t" style="left:74.29px;top:471px;font-size:11.5px;line-height:12px;letter-spacing:-0.347px;color:#000">Shipping</div>
<svg width="8" height="10" viewBox="0 0 8 10" class="abs" style="left:41px;top:490px"><path d="M1.700 1.500L5.300 5 1.700 8.500" fill="none" stroke="#727885" stroke-width="1.900"/></svg><svg width="14" height="13" viewBox="0 0 14 13" class="abs" style="left:54px;top:489px">
<defs><linearGradient id="fo27" x1="0" y1="0" x2="0" y2="1"><stop offset="0" stop-color="#ffff00"/><stop offset=".4" stop-color="#fff810"/><stop offset="1" stop-color="#ffd020"/></linearGradient></defs>
<path d="M1.500 2.500H7.500V1.500L8.500 .5H12.500L13.500 1.500V12.500H.5V3.500z" fill="url(#fo27)" stroke="#a87a00" stroke-width="1" stroke-linejoin="round"/>
<path d="M8 1h5v1H8z" fill="#e2aa00"/><path d="M1 3h6v1H1z" fill="#f4c000"/>
<path d="M8 2h5v1H8zM1 4h6v1H1zM7 3h1v1H7z" fill="#a87a00"/>
</svg><div class="t" style="left:74.29px;top:489px;font-size:11.5px;line-height:12px;letter-spacing:-0.289px;color:#000">Supplier</div>
<svg width="10" height="8" viewBox="0 0 10 8" class="abs" style="left:40px;top:510px"><path d="M1.500 1.700L5 5.300 8.500 1.700" fill="none" stroke="#727885" stroke-width="1.900"/></svg><svg width="14" height="13" viewBox="0 0 14 13" class="abs" style="left:54px;top:507px">
<defs><linearGradient id="fo28" x1="0" y1="0" x2="0" y2="1"><stop offset="0" stop-color="#ffff00"/><stop offset=".4" stop-color="#fff810"/><stop offset="1" stop-color="#ffd020"/></linearGradient></defs>
<path d="M1.500 2.500H7.500V1.500L8.500 .5H12.500L13.500 1.500V12.500H.5V3.500z" fill="url(#fo28)" stroke="#a87a00" stroke-width="1" stroke-linejoin="round"/>
<path d="M8 1h5v1H8z" fill="#e2aa00"/><path d="M1 3h6v1H1z" fill="#f4c000"/>
<path d="M8 2h5v1H8zM1 4h6v1H1zM7 3h1v1H7z" fill="#a87a00"/>
</svg><div class="t" style="left:74.29px;top:507px;font-size:11.5px;line-height:12px;letter-spacing:-0.361px;color:#000">System Manager</div>
<svg width="10" height="8" viewBox="0 0 10 8" class="abs" style="left:58px;top:528px"><path d="M1.500 1.700L5 5.300 8.500 1.700" fill="none" stroke="#727885" stroke-width="1.900"/></svg><svg width="14" height="13" viewBox="0 0 14 13" class="abs" style="left:72px;top:525px">
<defs><linearGradient id="fo29" x1="0" y1="0" x2="0" y2="1"><stop offset="0" stop-color="#ffff00"/><stop offset=".4" stop-color="#fff810"/><stop offset="1" stop-color="#ffd020"/></linearGradient></defs>
<path d="M1.500 2.500H7.500V1.500L8.500 .5H12.500L13.500 1.500V12.500H.5V3.500z" fill="url(#fo29)" stroke="#a87a00" stroke-width="1" stroke-linejoin="round"/>
<path d="M8 1h5v1H8z" fill="#e2aa00"/><path d="M1 3h6v1H1z" fill="#f4c000"/>
<path d="M8 2h5v1H8zM1 4h6v1H1zM7 3h1v1H7z" fill="#a87a00"/>
</svg><div class="t" style="left:92.29px;top:525px;font-size:11.5px;line-height:12px;letter-spacing:-0.220px;color:#000">Detail Reports</div>
<svg width="16" height="14" viewBox="0 0 16 14" class="abs" style="left:90px;top:542px">
<defs><linearGradient id="rp30" x1="0" y1="0" x2="0" y2="1"><stop offset="0" stop-color="#f9a6c6"/><stop offset=".5" stop-color="#f0609a"/><stop offset="1" stop-color="#e84a88"/></linearGradient></defs>
<rect x=".5" y=".5" width="15" height="13" fill="#fff" stroke="#555"/>
<path d="M5 2h1v1h-1zM7 2h1v1h-1zM9 2h1v1h-1zM11 2h1v1h-1zM13 2h1v1h-1zM5 4h1v1h-1zM7 4h1v1h-1zM9 4h1v1h-1zM11 4h1v1h-1zM13 4h1v1h-1zM5 6h1v1h-1zM7 6h1v1h-1zM9 6h1v1h-1zM13 6h1v1h-1zM5 8h1v1h-1zM13 8h1v1h-1z" fill="#5a5a5a"/>
<path d="M5 10V8.700L7 7.500 8.600 8.300 13.400 2.400V10z" fill="url(#rp30)"/>
<path d="M3.500 2v10M2 2.500h2M2 4.500h1M2 6.500h1M2 8.500h1M2 10.500h12" fill="none" stroke="#555" stroke-width="1"/>
</svg><div class="t" style="left:110.28px;top:543px;font-size:11.5px;line-height:12px;letter-spacing:-0.099px;color:#000">Country</div>
<svg width="16" height="14" viewBox="0 0 16 14" class="abs" style="left:90px;top:560px">
<defs><linearGradient id="rp31" x1="0" y1="0" x2="0" y2="1"><stop offset="0" stop-color="#f9a6c6"/><stop offset=".5" stop-color="#f0609a"/><stop offset="1" stop-color="#e84a88"/></linearGradient></defs>
<rect x=".5" y=".5" width="15" height="13" fill="#fff" stroke="#555"/>
<path d="M5 2h1v1h-1zM7 2h1v1h-1zM9 2h1v1h-1zM11 2h1v1h-1zM13 2h1v1h-1zM5 4h1v1h-1zM7 4h1v1h-1zM9 4h1v1h-1zM11 4h1v1h-1zM13 4h1v1h-1zM5 6h1v1h-1zM7 6h1v1h-1zM9 6h1v1h-1zM13 6h1v1h-1zM5 8h1v1h-1zM13 8h1v1h-1z" fill="#5a5a5a"/>
<path d="M5 10V8.700L7 7.500 8.600 8.300 13.400 2.400V10z" fill="url(#rp31)"/>
<path d="M3.500 2v10M2 2.500h2M2 4.500h1M2 6.500h1M2 8.500h1M2 10.500h12" fill="none" stroke="#555" stroke-width="1"/>
</svg>
</div>
<div class="vsb" style="left:283px;top:52px;width:17px;height:563px"></div>
<div class="arr-u" style="left:286px;top:58px"></div>
<div class="arr-d" style="left:286px;top:603px"></div>
<div class="thumb" style="left:283px;top:69px;width:15px;height:442px"></div>
<div class="grip" style="left:287px;top:287px"></div>
</div>
<div id="tab"></div>
<div class="t" style="left:332.69px;top:155px;font-size:11.5px;line-height:12px;letter-spacing:-0.174px;color:#2a2a35;z-index:3">Preview</div>
<div id="pv"><div id="pvarea">
<div id="page">
<div class="dash-v" style="left:19px;top:3px;height:600px"></div>
<div class="dash-v" style="left:527px;top:3px;height:600px"></div>
<div class="dash-h" style="left:4px;top:19px;width:540px"></div>
<div class="abs" style="left:26px;top:20px;width:495px;height:26px;background:#c0c0c0"></div>
<div class="abs" style="left:26px;top:50px;width:495px;height:4px;background:#c0c0c0"></div>
<div class="t" style="left:385.69px;top:23px;font-size:21px;line-height:23px;letter-spacing:0.305px;color:#000">Customer Info</div>
<div class="t" style="left:420.77px;top:59px;font-size:13px;line-height:15px;letter-spacing:-0.093px;color:#111">[Document Code]</div>
<svg class="abs" style="left:38px;top:70px" width="58" height="62" viewBox="0 0 58 62">
<defs>
<linearGradient id="lg1" x1="0" y1="0" x2="1" y2="1"><stop offset="0" stop-color="#1a8aec"/><stop offset=".45" stop-color="#0c6cd4"/><stop offset=".72" stop-color="#5ab0f0"/><stop offset="1" stop-color="#d4ecfc"/></linearGradient>
<linearGradient id="lg2" x1="0" y1="0" x2="1" y2="0"><stop offset="0" stop-color="#2f9af2"/><stop offset=".55" stop-color="#0e62c6"/><stop offset="1" stop-color="#0a3e8e"/></linearGradient>
<linearGradient id="lg3" x1="0" y1="0" x2="1" y2="0"><stop offset="0" stop-color="#083c8a"/><stop offset=".5" stop-color="#1272d8"/><stop offset="1" stop-color="#3a9ef2"/></linearGradient>
</defs>
<path fill-rule="evenodd" fill="url(#lg1)" d="M.7 30.300A20.350 10.600 0 1 0 41.400 30.300A20.350 10.600 0 1 0 .7 30.300zM6.500 30.800A16.100 5.600 0 1 1 38.700 30.800A16.100 5.600 0 1 1 6.500 30.800z"/>
<path fill-rule="evenodd" fill="url(#lg2)" transform="rotate(120 33 30.300) translate(0 60.600) scale(1 -1)" d="M.7 30.300A20.350 10 0 1 0 41.400 30.300A20.350 10 0 1 0 .7 30.300zM6.200 31.800A16.350 6 0 1 1 38.900 31.800A16.350 6 0 1 1 6.200 31.800z"/>
<path fill-rule="evenodd" fill="url(#lg3)" transform="rotate(240 33 30.300)" d="M.7 30.300A20.350 10 0 1 0 41.400 30.300A20.350 10 0 1 0 .7 30.300zM6.200 31.800A16.350 6 0 1 1 38.900 31.800A16.350 6 0 1 1 6.200 31.800z"/>
</svg>
<div class="t" style="left:39.82px;top:130px;font-size:7.5px;line-height:9px;letter-spacing:-0.528px;color:#1d4f94">connected<span style="color:#2b9ae6">business</span></div>
<div class="t" style="left:108.17px;top:72px;font-size:13px;line-height:15px;letter-spacing:-0.300px;color:#111">Connected Sports</div>
<div class="t" style="left:108.22px;top:88px;font-size:8.5px;line-height:10px;letter-spacing:-0.267px;color:#0a0a0a">101 Continental Blvd.</div>
<div class="t" style="left:108.22px;top:99px;font-size:8.5px;line-height:10px;letter-spacing:-0.450px;color:#0a0a0a">El Segundo, CA 90245</div>
<div class="t" style="left:108.22px;top:113px;font-size:8.5px;line-height:10px;letter-spacing:-0.639px;color:#0a0a0a">T 310 555 5551 &nbsp; F 310 555 5552</div>
<div class="t" style="left:108.22px;top:123px;font-size:8.5px;line-height:10px;letter-spacing:-0.309px;color:#0a0a0a">www.connectedsports.com</div>
<div class="abs" style="left:26px;top:149px;width:127px;height:53px;background:#c0c0c0"></div>
<div class="abs" style="left:26px;top:159.5px;width:127px;height:1px;background:#d6d6d6"></div>
<div class="abs" style="left:26px;top:170.2px;width:127px;height:1px;background:#d6d6d6"></div>
<div class="t" style="left:27.73px;top:150px;font-size:7px;line-height:7px;letter-spacing:-0.208px;color:#000;font-weight:bold">Customer Code</div>
<div class="t" style="left:155.13px;top:150px;font-size:7.2px;line-height:9px;letter-spacing:-0.210px;color:#111">CUST-000001</div>
<div class="t" style="left:27.73px;top:161px;font-size:7px;line-height:7px;letter-spacing:-0.005px;color:#000;font-weight:bold">Customer Name</div>
<div class="t" style="left:155.13px;top:161px;font-size:7.2px;line-height:9px;letter-spacing:-0.261px;color:#111">Christopher C. Cusson</div>
<div class="t" style="left:27.73px;top:172px;font-size:7px;line-height:7px;letter-spacing:0.061px;color:#000;font-weight:bold">Credit Limit</div>
<div class="t" style="left:27.73px;top:182px;font-size:7px;line-height:7px;letter-spacing:-0.228px;color:#000;font-weight:bold">Address</div>
<div class="t" style="left:155.13px;top:182px;font-size:7.2px;line-height:9px;letter-spacing:-0.083px;color:#111">SW cor.&nbsp; down road</div>
<div class="t" style="left:27.73px;top:193px;font-size:7px;line-height:7px;letter-spacing:-0.097px;color:#000;font-weight:bold">Address Type</div>
<div class="t" style="left:155.13px;top:192px;font-size:7.2px;line-height:9px;letter-spacing:-0.066px;color:#111">Residential</div>
<div class="t" style="left:498.83px;top:172px;font-size:7px;line-height:7px;letter-spacing:0.192px;color:#222">$ 0.00</div>
</div>
</div>
<div class="vsb" style="left:680px;top:0px;width:17px;height:579px"></div>
<div class="arr-u" style="left:684px;top:6px"></div>
<div class="arr-d" style="left:684px;top:568px"></div>
<div class="thumb" style="left:681px;top:17px;width:15px;height:422px"></div>
<div class="grip" style="left:685px;top:224px"></div>
<div class="abs" style="left:0;top:579px;width:680px;height:17px;background:linear-gradient(#f2f3f5,#ffffff 55%)"></div>
<div class="arr-l" style="left:6px;top:583px"></div>
<div class="arr-r" style="left:669px;top:583px"></div>
</div>
<div class="stab" style="top:154px;height:100px"><div class="abs" style="left:4px;top:6px"><svg width="18" height="18" viewBox="0 0 18 18">
<rect x=".5" y="1.500" width="14" height="10" fill="#f6f9fd" stroke="#4f86c8"/>
<path d="M1 2h13v1.500H1z" fill="#6aa0dc"/>
<path d="M5.500 3.500v8" stroke="#7aa8dc" stroke-width="1"/>
<g stroke="#5a6a80" stroke-width="1"><path d="M2 5.500h2M2 7.500h2M2 9.500h2"/></g>
<path d="M9 4.500Q10.500 3.500 11.300 5L13 7.500Q15.500 8 16.300 10L17 13 13.500 15.500 10.500 12.500Q9 10.500 9.800 9.800L10.800 10 8.300 6Q8 5 9 4.500z" fill="#f6c48a" stroke="#9a5a20" stroke-width=".8" stroke-linejoin="round"/>
<path d="M13.300 15.200L17 12.800 17.500 14.300 14.500 16.500z" fill="#2f6fc8"/>
</svg></div></div>
<div class="t" style="left:1044.2px;top:180.3px;font-size:11.500px;line-height:12px;letter-spacing:-0.361px;color:#2c2c3a;transform-origin:0 0;transform:rotate(90deg)">Property Grid</div>
<div class="stab" style="top:259px;height:110px"><div class="abs" style="left:4px;top:6px"><svg width="18" height="18" viewBox="0 0 18 18">
<rect x="3.500" y="1.500" width="11" height="9" rx="1" fill="#eef1f5" stroke="#6a7078"/>
<rect x="5.500" y="3.500" width="7" height="5" fill="#fff" stroke="#9aa0a8" stroke-width=".8"/>
<rect x="14" y="2.500" width="3.500" height="5.500" rx="1" fill="#5a9ae8" stroke="#2a62b8" stroke-width=".8"/>
<circle cx="7" cy="12.500" r="3.300" fill="#f39a28" stroke="#c46a0a" stroke-width=".8"/>
<rect x=".5" y="7.500" width="6.500" height="6.500" fill="#5cc83a" stroke="#2f8a18"/>
</svg></div></div>
<div class="t" style="left:1044.2px;top:285.3px;font-size:11.500px;line-height:12px;letter-spacing:-0.336px;color:#2c2c3a;transform-origin:0 0;transform:rotate(90deg)">Layout Explorer</div>
<div class="stab" style="top:370px;height:77px"><div class="abs" style="left:4px;top:7px"><svg width="18" height="18" viewBox="0 0 18 18">
<defs><linearGradient id="fc" x1="0" y1="0" x2="0" y2="1"><stop offset="0" stop-color="#ffd08a"/><stop offset="1" stop-color="#f39a28"/></linearGradient></defs>
<path d="M4 3.500Q4 1 6.500 1H14.500Q17 1 17 3.500V7.500Q17 10 14.500 10H6.500Q4 10 4 7.500z" fill="url(#fc)" stroke="#d07a10" stroke-width=".9"/>
<ellipse cx="14.500" cy="5.500" rx="2.200" ry="4" fill="#ffd9a6" stroke="#d07a10" stroke-width=".7"/>
<rect x="1.500" y="6.500" width="4.500" height="9" rx="1" fill="#fff" stroke="#2a72d0" stroke-width="1.300"/>
<rect x="8" y="6.500" width="4.500" height="9" rx="1" fill="#fff" stroke="#2a72d0" stroke-width="1.300"/>
</svg></div></div>
<div class="t" style="left:1044.2px;top:395.7px;font-size:11.500px;line-height:12px;letter-spacing:-0.403px;color:#2c2c3a;transform-origin:0 0;transform:rotate(90deg)">Field List</div>
<div class="stab" style="top:452px;height:76px"><div class="abs" style="left:4px;top:6px"><svg width="18" height="18" viewBox="0 0 18 18">
<path d="M2 2.500L11 12" stroke="#2a6ac8" stroke-width="2.600" stroke-linecap="round"/>
<path d="M2 2.500L5.500 6.200" stroke="#f08a1a" stroke-width="2.800" stroke-linecap="round"/>
<path d="M14.500 1.300Q11.500 1 10.600 3.600L3.200 11.300Q2.200 13 3.500 14T5.800 13.300L12.800 5.800Q15.300 5.800 15.800 2.800L14 4.500 12.300 3.200z" fill="#4a8ae0" stroke="#1f56a8" stroke-width=".7" stroke-linejoin="round"/>
<path d="M10 9.500L15.500 11.500 13.800 15.800 11 14z" fill="#e2e5ea" stroke="#6a7078" stroke-width=".8" stroke-linejoin="round"/>
</svg></div></div>
<div class="t" style="left:1044.2px;top:477.3px;font-size:11.500px;line-height:12px;letter-spacing:-0.389px;color:#2c2c3a;transform-origin:0 0;transform:rotate(90deg)">Tool Box</div>
<div class="abs" style="left:7px;top:142px;width:1px;height:636px;background:#9a9fa7"></div>
<div class="abs" style="left:1053px;top:142px;width:1px;height:636px;background:#9a9fa7"></div>
<div id="status"><svg class="abs" style="left:1033px;top:11px" width="11" height="11" viewBox="0 0 11 11"><g fill="#fff"><rect x="9" y="1" width="2" height="2"/><rect x="5" y="5" width="2" height="2"/><rect x="9" y="5" width="2" height="2"/><rect x="1" y="9" width="2" height="2"/><rect x="5" y="9" width="2" height="2"/><rect x="9" y="9" width="2" height="2"/></g><g fill="#868a91"><rect x="8" y="0" width="2" height="2"/><rect x="4" y="4" width="2" height="2"/><rect x="8" y="4" width="2" height="2"/><rect x="0" y="8" width="2" height="2"/><rect x="4" y="8" width="2" height="2"/><rect x="8" y="8" width="2" height="2"/></g></svg></div>
<div class="t" style="left:14.19px;top:784px;font-size:11.5px;line-height:12px;letter-spacing:-0.472px;color:#45454f">Ready</div>
</div>
</body>
</html>
